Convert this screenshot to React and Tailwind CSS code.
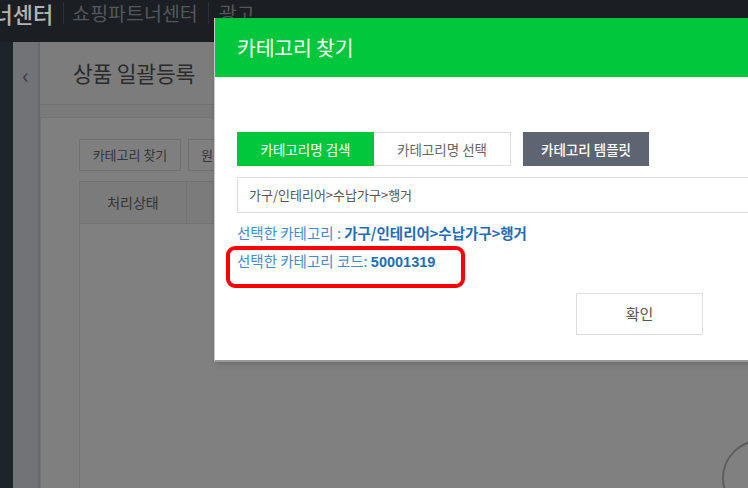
const font = { fontFamily: '"Noto Sans CJK KR", "Liberation Sans", sans-serif' };

const SelectedInfo = () => (
  <div className="mt-[6px] text-[14.5px] leading-[28px] text-[#3f8dd0]">
    <div>
      선택한 카테고리 : <span className="font-bold text-[#1f6cb8]">가구/인테리어&gt;수납가구&gt;행거</span>
    </div>
    <div>
      선택한 카테고리 코드: <span className="font-bold text-[#1f6cb8] [font-family:'Liberation_Sans',sans-serif]">50001319</span>
    </div>
  </div>
);

const CategoryModal = () => (
  <div className="absolute left-[214px] top-[18px] w-[560px] h-[344px] bg-white border-l border-[#c8c8c8] border-b-2 border-b-[#9a9a9a] shadow-md">
    {/* header */}
    <div className="h-[59px] bg-[#00c73c] flex items-center pl-[22px]">
      <span className="text-white text-[20.5px] tracking-[-0.2px]">카테고리 찾기</span>
    </div>

    <div className="pl-[22px] pt-[55px]">
      {/* tabs */}
      <div className="flex items-center text-[13.5px]">
        <button className="w-[137px] h-[34px] bg-[#00c73c] text-white">카테고리명 검색</button>
        <button className="w-[137px] h-[34px] bg-white text-[#666] border border-[#dcdcdc] border-l-0">카테고리명 선택</button>
        <button className="ml-[12px] w-[126px] h-[34px] bg-[#5f6473] text-white font-medium">카테고리 템플릿</button>
      </div>

      {/* search input */}
      <div className="mt-[11px] h-[36px] border border-[#dcdcdc] flex items-center pl-[11px] text-[13px] text-[#555]">
        가구/인테리어&gt;수납가구&gt;행거
      </div>

      <SelectedInfo />

      <div className="flex mt-[17px] pl-[339px]">
        <button className="w-[127px] h-[42px] border border-[#dddddd] bg-white text-[15px] text-[#555]">확인</button>
      </div>
    </div>

    {/* annotation box */}
    <div className="absolute left-[11px] top-[228px] w-[239px] h-[42px] border-[4px] border-[#ff0000] rounded-[9px]" />
  </div>
);

export default function App() {
  return (
    <div className="relative w-[748px] h-[488px] overflow-hidden bg-[#7a7a7a]" style={font}>
      {/* top bar */}
      <div className="h-[42px] bg-[#1b1e22] flex items-start whitespace-nowrap">
        <span className="ml-[-48px] text-[22px] leading-[26px] text-[#b2b4b6] font-medium">파트너센터</span>
        <span className="ml-[10px] mt-[2px] w-px h-[22px] bg-[#2c3036]" />
        <span className="ml-[8px] text-[19.5px] leading-[26px] text-[#54585d]">쇼핑파트너센터</span>
        <span className="ml-[10px] mt-[2px] w-px h-[22px] bg-[#2c3036]" />
        <span className="ml-[10px] text-[19.5px] leading-[26px] text-[#54585d]">광고</span>
      </div>

      <div className="flex h-[446px]">
        {/* sidebar */}
        <div className="w-[13px] bg-[#1e242c]" />
        <div className="w-[27px] bg-[#717377] border-r-2 border-[#68696c] flex justify-center pt-[20px]">
          <span className="text-[#3a3c40] text-[22px] leading-[24px]">‹</span>
        </div>

        {/* main */}
        <div className="flex-1 flex flex-col">
          <div className="h-[63px] bg-[#7c7c7c] border-b border-[#727272] flex items-center pl-[33px]">
            <span className="text-[21.5px] text-[#2b2b2b] tracking-[-0.2px]">상품 일괄등록</span>
          </div>
          <div className="flex-1 pt-[12px]">
            <div className="h-full bg-[#7f7f7f] border-t border-l border-[#747474] pt-[21px] pl-[38px]">
              <div className="flex gap-[7px] text-[13px] text-[#353535]">
                <span className="w-[102px] h-[32px] border border-[#717171] flex items-center justify-center">카테고리 찾기</span>
                <span className="w-[60px] h-[32px] border border-[#717171] flex items-center pl-[12px]">원산지</span>
              </div>
              <div className="mt-[10px] h-full border-l border-t border-[#727272] bg-[#808080]">
                <div className="flex h-[42px] bg-[#7b7b7b] border-b border-[#727272]">
                  <span className="w-[107px] border-r border-[#727272] flex items-center justify-center text-[14px] text-[#333]">처리상태</span>
                  <span className="flex-1" />
                </div>
              </div>
            </div>
          </div>
        </div>
      </div>

      {/* floating circle button */}
      <div className="absolute left-[722px] top-[440px] w-[76px] h-[76px] rounded-full border-2 border-[#5e5e5e]" />

      <CategoryModal />
    </div>
  );
}
